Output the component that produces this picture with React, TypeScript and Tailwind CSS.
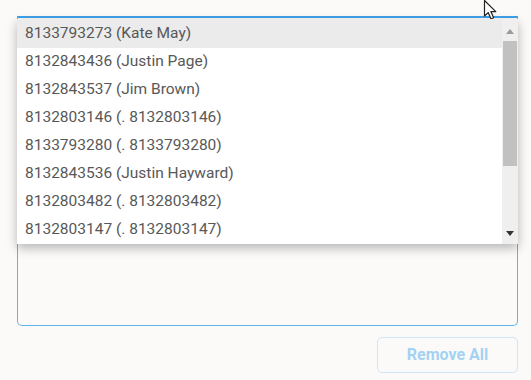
import React from 'react';

const contacts = [
  '8133793273 (Kate May)',
  '8132843436 (Justin Page)',
  '8132843537 (Jim Brown)',
  '8132803146 (. 8132803146)',
  '8133793280 (. 8133793280)',
  '8132843536 (Justin Hayward)',
  '8132803482 (. 8132803482)',
  '8132803147 (. 8132803147)',
];

const Cursor = () => (
  <svg className="absolute left-[483px] top-[-1px]" width="16" height="22" viewBox="0 0 16 22">
    <path
      d="M1.5 1.5 L1.5 17 L5.2 13.6 L8 20 L10.6 18.8 L7.9 12.6 L12.8 12.6 Z"
      fill="#ffffff"
      stroke="#222222"
      strokeWidth="1.2"
      strokeLinejoin="round"
    />
  </svg>
);

const ScrollTrack = () => (
  <div className="flex w-[16px] flex-col items-center bg-[#efefef]">
    <div className="mt-[10px] h-0 w-0 border-x-[4px] border-b-[5px] border-x-transparent border-b-[#9a9a9a]" />
    <div className="mt-[7px] h-[125px] w-[14px] bg-[#c1c1c1]" />
    <div className="flex-1" />
    <div className="mb-[8px] h-0 w-0 border-x-[4px] border-t-[5px] border-x-transparent border-t-[#333333]" />
  </div>
);

export default function App() {
  return (
    <div
      className="relative h-[380px] w-[531px] overflow-hidden bg-[#fbfaf9]"
      style={{ fontFamily: 'Roboto, "Liberation Sans", sans-serif' }}
    >
      <div className="px-[17px] pt-[16px]">
        <div className="relative h-[310px] w-[501px] rounded-b-[5px] border border-t-2 border-[#62b3e8] border-t-[#3ea2ea]">
          <div className="absolute left-[-1px] top-[1px] z-10 flex h-[225px] w-[501px] bg-white shadow-[0_4px_10px_rgba(0,0,0,0.28)]">
            <ul className="flex-1">
              {contacts.map((c, i) => (
                <li
                  key={c}
                  className={
                    'flex h-[28px] items-center pl-[8px] text-[15.5px] text-[#585858] ' +
                    (i === 0 ? 'h-[29px] bg-[#ebebeb]' : 'bg-white')
                  }
                >
                  {c}
                </li>
              ))}
            </ul>
            <ScrollTrack />
          </div>
        </div>
      </div>
      <div className="flex justify-end pr-[13px] pt-[11px]">
        <button className="h-[36px] w-[141px] rounded-[5px] border border-[#cfe5f6] text-[16px] font-bold text-[#a3d2f3]">
          Remove All
        </button>
      </div>
      <Cursor />
    </div>
  );
}
